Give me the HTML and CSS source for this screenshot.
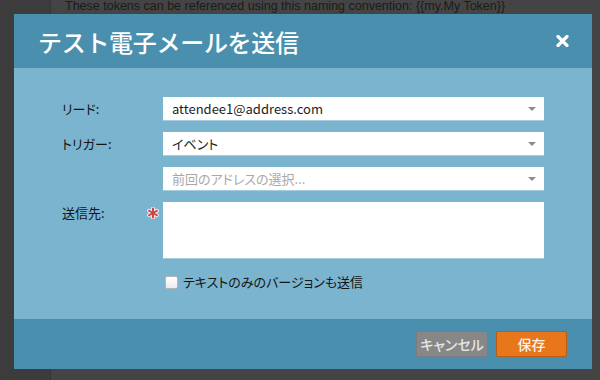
FILE: index.html
```html
<!DOCTYPE html>
<html lang="ja">
<head>
<meta charset="utf-8">
<link rel="stylesheet" href="styles.css">
</head>
<body>
<div class="page">
  <div class="side"></div>
  <div class="content">
    <p class="note">These tokens can be referenced using this naming convention: {{my.My Token}}</p>
  </div>
</div>

<div class="dialog">
  <div class="dialog-header">
    <h1 class="dialog-title">テスト電子メールを送信</h1>
    <svg class="close" width="13" height="12" viewBox="0 0 13 12">
      <path d="M2 1.5 L11 10.5 M11 1.5 L2 10.5" stroke="#fff" stroke-width="3.2" stroke-linecap="round"/>
    </svg>
  </div>

  <div class="dialog-body">
    <div class="form">
      <label class="label">リード:</label>
      <span></span>
      <div class="select"><span class="value">attendee1@address.com</span><i class="caret"></i></div>

      <label class="label">トリガー:</label>
      <span></span>
      <div class="select"><span class="value">イベント</span><i class="caret"></i></div>

      <span></span>
      <span></span>
      <div class="select"><span class="value placeholder">前回のアドレスの選択...</span><i class="caret"></i></div>

      <label class="label label-top">送信先:</label>
      <span class="req">
        <svg width="12" height="12" viewBox="0 0 12 12">
          <g stroke="#f3e6e6" stroke-width="4" stroke-linecap="round">
            <path d="M6 1.5 V10.5 M2.1 3.75 L9.9 8.25 M9.9 3.75 L2.1 8.25"/>
          </g>
          <g stroke="#c8464a" stroke-width="2" stroke-linecap="round">
            <path d="M6 1.5 V10.5 M2.1 3.75 L9.9 8.25 M9.9 3.75 L2.1 8.25"/>
          </g>
        </svg>
      </span>
      <div class="textarea"></div>

      <span></span>
      <span></span>
      <div class="check-row">
        <span class="checkbox"></span>
        <span class="check-label">テキストのみのバージョンも送信</span>
      </div>
    </div>
  </div>

  <div class="dialog-footer">
    <button class="btn btn-cancel">キャンセル</button>
    <button class="btn btn-save">保存</button>
  </div>
</div>
</body>
</html>
```

FILE: styles.css
```css
html, body {
  margin: 0;
  padding: 0;
}
body {
  width: 600px;
  height: 380px;
  overflow: hidden;
  background: #424242;
  font-family: "Noto Sans CJK JP", "Noto Sans", sans-serif;
  position: relative;
}
.page {
  display: flex;
  height: 380px;
}
.side {
  width: 50px;
  background: #3c3c3c;
  border-right: 1px solid #363636;
}
.content {
  flex: 1;
  background: #444444;
}
.note {
  margin: 0 0 0 14px;
  font-family: "Liberation Sans", Arial, sans-serif;
  font-size: 12.5px;
  line-height: 12px;
  color: #1b1b1b;
}

.dialog {
  position: absolute;
  left: 14px;
  top: 14px;
  width: 578px;
  height: 355px;
  display: flex;
  flex-direction: column;
  background: #7ab4cf;
}
.dialog-header {
  height: 54px;
  background: #4a8fae;
  display: flex;
  align-items: center;
  justify-content: space-between;
  padding: 0 23px 0 24px;
  box-sizing: border-box;
}
.dialog-title {
  margin: 0;
  font-size: 24px;
  font-weight: 500;
  color: #ffffff;
  letter-spacing: -0.3px;
}
.close {
  display: block;
}

.dialog-body {
  flex: 1;
  padding: 29px 48px 0 48px;
  font-feature-settings: "palt";
}
.form {
  display: grid;
  grid-template-columns: 85px 16px 1fr;
  row-gap: 12px;
  align-items: center;
}
.label {
  font-size: 13px;
  color: #151515;
  line-height: 23px;
}
.label-top {
  align-self: start;
  line-height: 20px;
  padding-top: 1px;
}
.req {
  align-self: start;
  padding-top: 5px;
  line-height: 0;
}
.select {
  height: 23px;
  background: #ffffff;
  display: flex;
  align-items: center;
  justify-content: space-between;
  padding: 0 8px 0 9px;
  box-sizing: border-box;
  box-shadow: 0 1px 0 #a9cde0;
}
.value {
  font-size: 13px;
  color: #1d1d1d;
}
.placeholder {
  color: #a8a8a8;
}
.caret {
  width: 0;
  height: 0;
  border-left: 4px solid transparent;
  border-right: 4px solid transparent;
  border-top: 4px solid #8c8c8c;
}
.textarea {
  height: 56px;
  background: #ffffff;
  box-shadow: 0 1px 0 #a9cde0;
}
.check-row {
  display: flex;
  align-items: center;
  gap: 5px;
  margin-top: 3px;
  padding-left: 2px;
}
.checkbox {
  width: 11px;
  height: 11px;
  border: 1px solid #b5b5b5;
  border-radius: 2px;
  background: linear-gradient(#ffffff, #ececec);
}
.check-label {
  font-size: 13px;
  color: #151515;
  line-height: 18px;
}

.dialog-footer {
  height: 50px;
  background: #4a8fae;
  display: flex;
  justify-content: flex-end;
  align-items: flex-start;
  gap: 8px;
  padding: 12px 25px 0 0;
  box-sizing: border-box;
  font-feature-settings: "palt";
}
.btn {
  height: 26px;
  margin: 0;
  padding: 0;
  font-family: "Noto Sans CJK JP", sans-serif;
  font-size: 14px;
  font-weight: 500;
  border-radius: 2px;
  cursor: pointer;
  font-feature-settings: "palt";
}
.btn-cancel {
  width: 72px;
  background: #878787;
  border: 1px solid #7c7c7c;
  color: #e6e6e6;
}
.btn-save {
  width: 71px;
  background: #e8761b;
  border: 1px solid #b95c12;
  color: #f7f3ee;
}
```
